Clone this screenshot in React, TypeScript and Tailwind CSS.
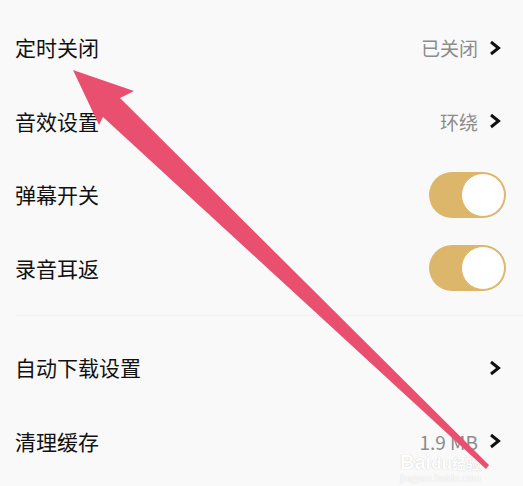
const font = { fontFamily: '"Noto Sans CJK SC", "Noto Sans", sans-serif' };

const Chevron = () => (
  <svg width="12" height="16" viewBox="0 0 12 16" className="shrink-0">
    <polyline points="2,2 9.5,8 2,14" fill="none" stroke="#111" strokeWidth="3" strokeLinejoin="miter" />
  </svg>
);

const Toggle = () => (
  <div className="w-[77px] h-[46px] rounded-full bg-[#dcb66a] flex items-center justify-end pr-px -mr-[5px]">
    <div className="w-[44px] h-[44px] rounded-full bg-white border border-[#dcb66a]" />
  </div>
);

type RowProps = { label: string; value?: string; toggle?: boolean; chevron?: boolean };

const Row = ({ label, value, toggle, chevron }: RowProps) => (
  <div className="h-[73.5px] flex items-center justify-between pl-[15px] pr-[22px]">
    <span className="text-[21px] text-[#111] leading-none">{label}</span>
    <div className="flex items-center gap-[11px]">
      {value && <span className="text-[19px] text-[#8c8c8c] leading-none">{value}</span>}
      {chevron && <Chevron />}
      {toggle && <Toggle />}
    </div>
  </div>
);

export default function App() {
  return (
    <div className="relative w-[523px] h-[486px] overflow-hidden bg-[#f9f9f9]" style={font}>
      <div className="pt-[11px]">
        <Row label="定时关闭" value="已关闭" chevron />
        <Row label="音效设置" value="环绕" chevron />
        <Row label="弹幕开关" toggle />
        <Row label="录音耳返" toggle />
        <div className="mt-[10px] mb-[15px] ml-[15px] h-px bg-[#f1f1f1]" />
        <Row label="自动下载设置" chevron />
        <Row label="清理缓存" value="1.9 MB" chevron />
      </div>

      {/* watermark */}
      <div className="absolute left-[400px] top-[452px] pointer-events-none leading-none">
        <div className="text-[20px] font-bold text-white [text-shadow:0_0_1px_#bdbdbd]" style={{ fontFamily: '"Liberation Sans", sans-serif' }}>
          Bai<span className="text-[17px]">du</span>
          <span className="text-[14px]" style={font}>经验</span>
        </div>
        <div className="text-[10px] text-white [text-shadow:0_0_1px_#c8c8c8] mt-[2px]" style={{ fontFamily: '"Liberation Sans", sans-serif' }}>
          jingyan.baidu.com
        </div>
      </div>

      {/* annotation arrow */}
      <svg className="absolute inset-0 pointer-events-none" width="523" height="486" viewBox="0 0 523 486">
        <polygon
          points="73,70 134,91 120,98 489,465 486,469 103,117 99,125"
          fill="#e9506f"
        />
      </svg>
    </div>
  );
}
